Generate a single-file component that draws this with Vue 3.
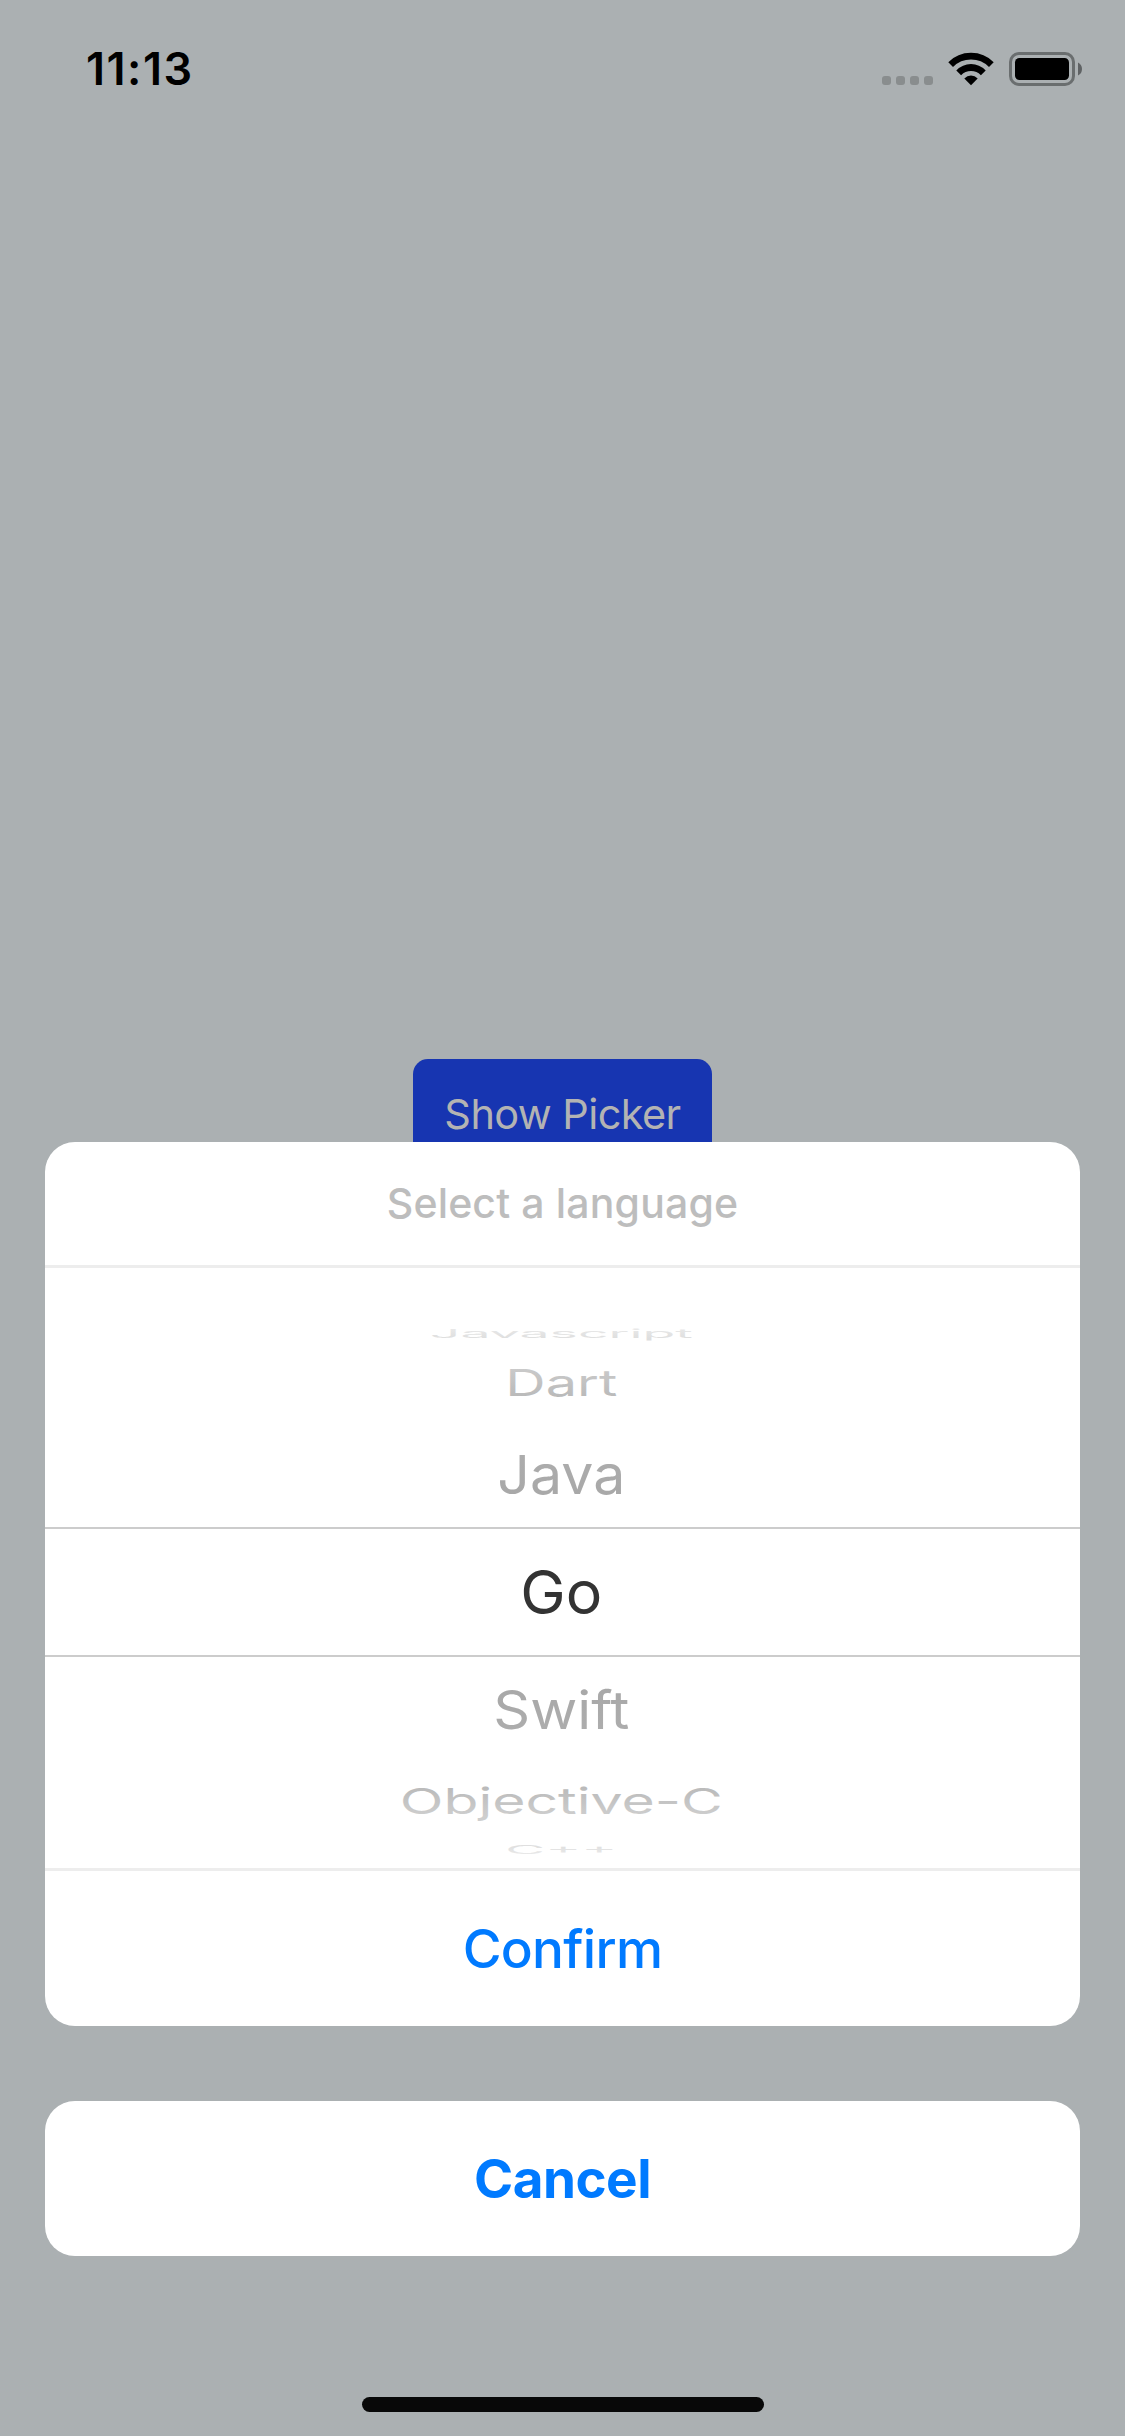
<script setup>
const before = [
  { text: 'Javascript', height: 40, base: 28, length: 263, capScale: 0.205, from: '#e9e9e9', to: '#dedede' },
  { text: 'Dart', height: 70, base: 46, length: 112, capScale: 0.615, from: '#cbcbcb', to: '#b9b9b9' },
  { text: 'Java', height: 107, base: 74, length: 128, capScale: 0.9, from: '#adadad', to: '#a8a8a8' },
]
const selected = [
  { text: 'Go', height: 126, base: 85, length: 82, capScale: 1.01, from: '#333333', to: '#333333' },
]
const after = [
  { text: 'Swift', height: 108, base: 72, length: 136, capScale: 0.88, from: '#a8a8a8', to: '#adadad' },
  { text: 'Objective-C', height: 70, base: 49, length: 323, capScale: 0.6, from: '#b9b9b9', to: '#cecece' },
  { text: 'C++', height: 33, base: 19.2, length: 112, capScale: 0.2, from: '#dedede', to: '#e9e9e9' },
]
const groups = [
  { name: 'before', items: before },
  { name: 'selected', items: selected },
  { name: 'after', items: after },
]
const gradientId = (item) => `shade-${item.text.replace(/\W/g, '')}`
</script>

<template>
  <div class="screen">
    <header class="status">
      <span class="time">11:13</span>
      <div class="indicators">
        <div class="signal"><i v-for="n in 4" :key="n"></i></div>
        <svg class="wifi" width="46" height="34" viewBox="0 0 46 34">
          <path d="M0.3 10.2Q9.5 0.7 23 0.7T45.7 10.2L41 15Q33.5 7.6 23 7.6T5 15Z" />
          <path d="M8.3 18.5Q14.5 12 23 12T37.7 18.5L32.9 23.2Q28.8 19 23 19T13.1 23.2Z" />
          <path d="M16.3 26.6Q19.2 23.4 23 23.4T29.7 26.6L23 33.3Z" />
        </svg>
        <svg class="battery" width="74" height="34" viewBox="0 0 74 34">
          <rect x="1.5" y="1.5" width="63" height="31" rx="8.5" fill="none" stroke="#6a6e6f" stroke-width="3" />
          <rect x="6" y="6" width="54" height="22" rx="4.5" />
          <path d="M69 10.5Q73 12.5 73 17T69 23.5Z" fill="#5f6264" />
        </svg>
      </div>
    </header>

    <main class="page">
      <button class="show">Show Picker</button>
    </main>

    <section class="sheet">
      <div class="card">
        <div class="title"><span>Select a language</span></div>
        <div class="wheel">
          <div v-for="group in groups" :key="group.name" :class="group.name">
            <svg
              v-for="item in group.items"
              :key="item.text"
              class="item"
              width="1035"
              :height="item.height"
            >
              <defs>
                <linearGradient :id="gradientId(item)" x1="0" y1="0" x2="0" y2="1">
                  <stop offset="0.15" :stop-color="item.from" />
                  <stop offset="0.85" :stop-color="item.to" />
                </linearGradient>
              </defs>
              <text
                :transform="`translate(516.3 ${item.base}) scale(1 ${item.capScale})`"
                :textLength="item.length"
                lengthAdjust="spacingAndGlyphs"
                text-anchor="middle"
                :fill="`url(#${gradientId(item)})`"
              >{{ item.text }}</text>
            </svg>
          </div>
        </div>
        <button class="confirm"><span>Confirm</span></button>
      </div>
      <button class="cancel"><span>Cancel</span></button>
    </section>

    <div class="home"></div>
  </div>
</template>

<style>
body {
  background: #abb0b2;
}
</style>

<style scoped>
.screen {
  width: 1125px;
  height: 2436px;
  overflow: hidden;
  display: flex;
  flex-direction: column;
  background: #abb0b2;
  font-family: Inter, "Liberation Sans", sans-serif;
}
button {
  border: 0;
  padding: 0;
  font-family: inherit;
  display: flex;
  justify-content: center;
}
.status {
  height: 132px;
  flex: none;
  display: flex;
  justify-content: space-between;
  padding: 0 42px 0 86px;
}
.time {
  font-size: 45px;
  font-weight: 600;
  line-height: 52px;
  margin-top: 43px;
  letter-spacing: 1.5px;
}
.indicators {
  display: flex;
  align-items: flex-start;
  padding-top: 52px;
}
.signal {
  display: flex;
  gap: 5px;
  margin: 24px 15px 0 0;
}
.signal i {
  width: 9px;
  height: 9px;
  border-radius: 3px;
  background: #898d8e;
}
.wifi {
  margin-right: 15px;
}
.page {
  height: 1010px;
  flex: none;
  overflow: hidden;
  display: flex;
  justify-content: center;
  align-items: flex-start;
  padding-top: 927px;
  box-sizing: border-box;
}
.show {
  width: 299px;
  height: 111px;
  flex: none;
  border-radius: 15px;
  background: #1735b1;
  color: #b3b3b3;
  font-size: 41.5px;
  line-height: 50px;
  letter-spacing: -0.6px;
  padding-top: 30px;
  align-items: flex-start;
  white-space: nowrap;
}
.sheet {
  flex: none;
  padding: 0 45px;
  display: flex;
  flex-direction: column;
  gap: 75px;
}
.card {
  height: 884px;
  border-radius: 30px;
  background: #fff;
}
.title {
  height: 123px;
  border-bottom: 3px solid #ededed;
  color: #bdbdbd;
  font-size: 41px;
  font-weight: 500;
  line-height: 50px;
  letter-spacing: 0.15px;
  display: flex;
  justify-content: center;
}
.title span {
  margin-top: 36px;
}
.wheel {
  height: 600px;
  padding-top: 42px;
  box-sizing: border-box;
}
.selected {
  border-top: 2px solid #ccc;
  border-bottom: 2px solid #ccc;
}
.item {
  display: block;
  font-size: 60px;
}
.confirm,
.cancel {
  width: 100%;
  height: 155px;
  align-items: center;
  color: #007aff;
  font-size: 53px;
}
.confirm {
  height: 158px;
  border-top: 3px solid #ededed;
  border-radius: 0;
  background: transparent;
  font-weight: 500;
  letter-spacing: -0.7px;
}
.cancel {
  border-radius: 30px;
  background: #fff;
  font-weight: 700;
  letter-spacing: -0.5px;
}
.home {
  width: 402px;
  height: 15px;
  flex: none;
  margin: 141px 0 0 362px;
  border-radius: 8px;
  background: #080808;
}
</style>
